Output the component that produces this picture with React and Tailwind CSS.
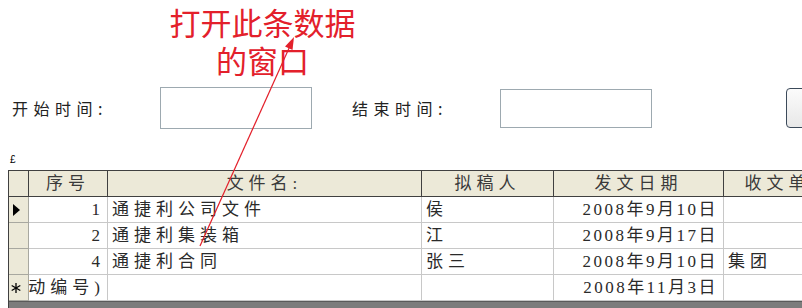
import React from "react";

const sel = "shrink-0 w-[20px] bg-[#ece9d8] border-r border-b border-[#a8a8a0] flex items-center";
const cell = "shrink-0 border-r border-b border-[#c8c8c8] flex items-center overflow-hidden whitespace-nowrap";

function Row({ mark, no, name, person, date, unit }) {
  return (
    <div className="flex h-[26px]">
      <div className={sel + " pl-[4px]"}>
        {mark === "arrow" && (
          <svg width="8" height="12" viewBox="0 0 8 12">
            <polygon points="0,0 7,6 0,12" fill="#000" />
          </svg>
        )}
        {mark === "star" && (
          <svg width="10" height="10" viewBox="0 0 10 10" className="-ml-[2px]">
            <g stroke="#000" strokeWidth="1.3">
              <line x1="5" y1="0" x2="5" y2="10" />
              <line x1="0.7" y1="2.5" x2="9.3" y2="7.5" />
              <line x1="0.7" y1="7.5" x2="9.3" y2="2.5" />
            </g>
          </svg>
        )}
      </div>
      <div className={cell + " w-[79px] justify-end pr-[2px]"}>
        <span className="shrink-0">{no}</span>
      </div>
      <div className={cell + " w-[314px] pl-[4px]"}>{name}</div>
      <div className={cell + " w-[132px] pl-[4px]"}>{person}</div>
      <div className={cell + " w-[170px] justify-end pr-[5px] tracking-[2.5px] text-[17px]"}>{date}</div>
      <div className={cell + " w-[130px] pl-[4px]"}>{unit}</div>
    </div>
  );
}

export default function App() {
  return (
    <div className="relative w-[802px] h-[308px] overflow-hidden bg-white font-['Liberation_Serif','Noto_Sans_CJK_SC',serif]">
      <div className="ml-[160px] w-[205px] pt-[3px] text-center text-[31px] leading-[38px] text-[#e3202b] font-['Noto_Sans_CJK_SC',sans-serif]">
        打开此条数据
        <br />
        的窗口
      </div>

      <div className="mt-[8px] flex items-center h-[42px] pl-[12px] text-[16px] tracking-[5.5px] text-[#222] font-['Noto_Sans_CJK_SC',sans-serif]">
        <div className="shrink-0 w-[148px]">开始时间:</div>
        <div className="shrink-0 w-[152px] h-[42px] border border-[#9da9b0] bg-white" />
        <div className="shrink-0 w-[148px] ml-[40px]">结束时间:</div>
        <div className="shrink-0 w-[152px] h-[39px] border border-[#9da9b0] bg-white" />
        <div className="shrink-0 ml-[134px] w-[40px] h-[40px] rounded-[4px] border border-[#3c4a5a] bg-linear-to-b from-[#fbfbfb] to-[#e8e8e8]" />
      </div>

      <div className="h-[41px] flex items-end pl-[10px] pb-[4px] text-[10px] leading-[12px] text-black font-['Liberation_Sans',sans-serif]">
        £
      </div>

      <div className="ml-[8px] w-[900px] border-t border-l border-[#404040] text-[17px] tracking-[5px] text-[#2a2a2a]">
        <div className="flex h-[26px] bg-[#ece9d8] text-[#3a3a3a]">
          <div className="shrink-0 w-[20px] border-r border-b border-[#404040]" />
          <div className="shrink-0 w-[79px] border-r border-b border-[#404040] flex items-center justify-center">序号</div>
          <div className="shrink-0 w-[314px] border-r border-b border-[#404040] flex items-center justify-center">文件名:</div>
          <div className="shrink-0 w-[132px] border-r border-b border-[#404040] flex items-center justify-center">拟稿人</div>
          <div className="shrink-0 w-[170px] border-r border-b border-[#404040] flex items-center justify-center">发文日期</div>
          <div className="shrink-0 w-[130px] border-r border-b border-[#404040] flex items-center justify-center">收文单位</div>
        </div>
        <Row mark="arrow" no="1" name="通捷利公司文件" person="侯" date="2008年9月10日" unit="" />
        <Row no="2" name="通捷利集装箱" person="江" date="2008年9月17日" unit="" />
        <Row no="4" name="通捷利合同" person="张三" date="2008年9月10日" unit="集团" />
        <Row mark="star" no="(自动编号)" name="" person="" date="2008年11月3日" unit="" />
        <div className="h-[10px] bg-[#7c7c7c] border-t border-[#5a5a5a]" />
      </div>

      <svg className="absolute inset-0 pointer-events-none" width="802" height="308" viewBox="0 0 802 308">
        <line x1="200" y1="246" x2="290" y2="46" stroke="#e3202b" strokeWidth="1.2" />
        <polygon points="294,37 292.5,50 285,46.5" fill="#e3202b" />
      </svg>
    </div>
  );
}
